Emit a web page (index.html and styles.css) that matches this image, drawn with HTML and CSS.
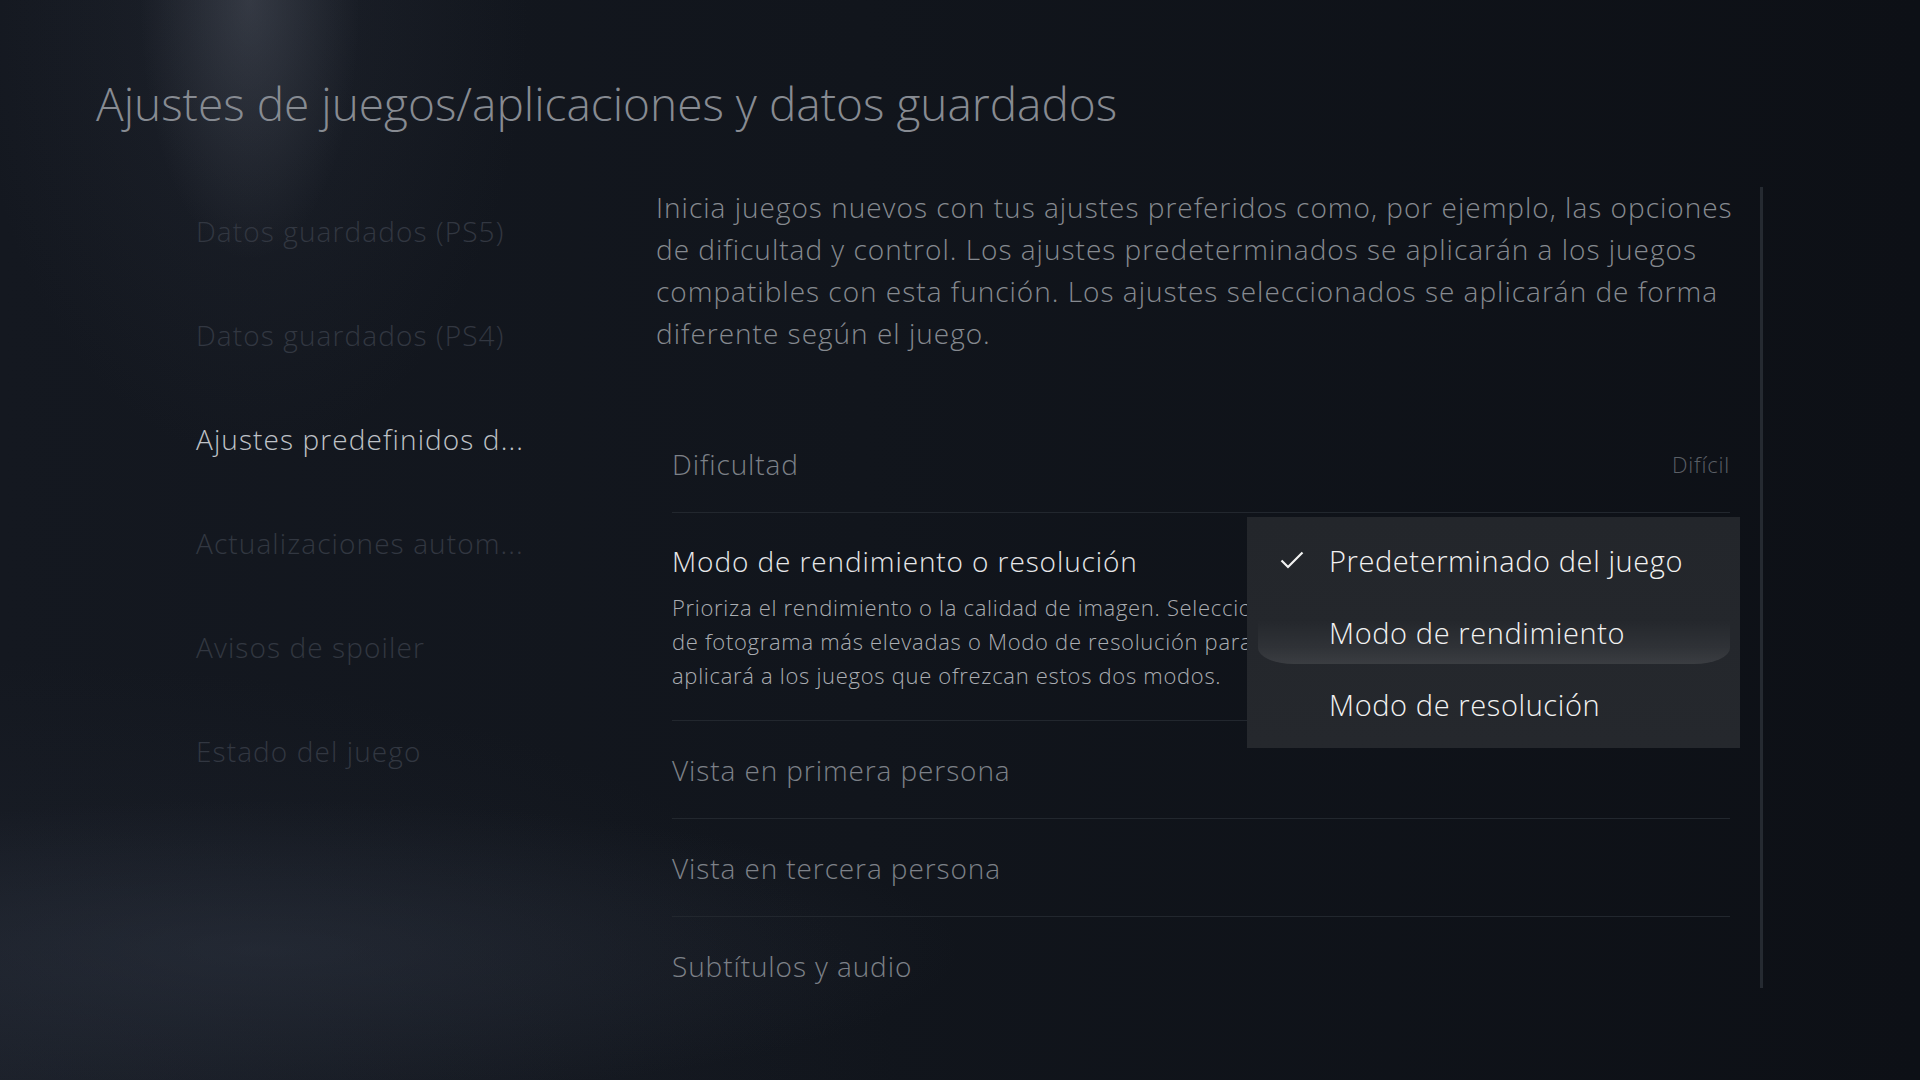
FILE: index.html
```html
<!DOCTYPE html>
<html lang="es">

<head>
  <meta charset="UTF-8">
  <meta name="viewport" content="width=device-width, initial-scale=1.0">
  <title>Ajustes de juegos/aplicaciones y datos guardados</title>
  <link rel="stylesheet" href="styles.css">
</head>

<body>
  <header class="top">
    <h1>Ajustes de juegos/aplicaciones y datos guardados</h1>
  </header>

  <div class="main">
    <!-- Left menu -->
    <nav class="side">
      <div class="side-item">Datos guardados (PS5)</div>
      <div class="side-item">Datos guardados (PS4)</div>
      <div class="side-item active">Ajustes predefinidos d...</div>
      <div class="side-item">Actualizaciones autom...</div>
      <div class="side-item">Avisos de spoiler</div>
      <div class="side-item">Estado del juego</div>
    </nav>

    <!-- Settings content -->
    <section class="content">
      <p class="intro">Inicia juegos nuevos con tus ajustes preferidos como, por ejemplo, las opciones<br>de dificultad y control. Los ajustes predeterminados se aplicarán a los juegos<br>compatibles con esta función. Los ajustes seleccionados se aplicarán de forma<br>diferente según el juego.</p>

      <ul class="options">
        <li class="option">
          <span>Dificultad</span>
          <span class="value">Difícil</span>
        </li>
        <li class="option option-open">
          <div class="option-title">Modo de rendimiento o resolución</div>
          <!-- the open dropdown hides the end of these lines -->
          <p class="option-desc">Prioriza el rendimiento o la calidad de imagen. Selecciona<br>de fotograma más elevadas o Modo de resolución para<br>aplicará a los juegos que ofrezcan estos dos modos.</p>

          <div class="dropdown">
            <div class="dropdown-item">
              <svg class="check" width="24" height="18" viewBox="0 0 24 18">
                <path d="M1.5 9.5 L8 16 L22.5 1.5" fill="none" stroke="#f2f2f2" stroke-width="2.2" />
              </svg>
              <span>Predeterminado del juego</span>
            </div>
            <div class="dropdown-item focused">
              <span class="check"></span>
              <span>Modo de rendimiento</span>
            </div>
            <div class="dropdown-item">
              <span class="check"></span>
              <span>Modo de resolución</span>
            </div>
          </div>
        </li>
        <li class="option"><span>Vista en primera persona</span></li>
        <li class="option"><span>Vista en tercera persona</span></li>
        <li class="option"><span>Subtítulos y audio</span></li>
      </ul>
    </section>

    <div class="scrollbar"></div>
  </div>
</body>

</html>
```

FILE: styles.css
```css
html,
body {
  margin: 0;
  padding: 0;
}

body {
  width: 1920px;
  height: 1080px;
  overflow: hidden;
  font-family: "Open Sans", "Noto Sans", sans-serif;
  font-weight: 300;
  color: #8a8e94;
  background:
    radial-gradient(ellipse 110px 260px at 250px 0px, rgba(130, 136, 150, 0.24), transparent 100%),
    radial-gradient(ellipse 280px 460px at 250px 0px, rgba(60, 66, 80, 0.22), transparent 100%),
    radial-gradient(ellipse 700px 150px at 260px 950px, rgba(60, 68, 84, 0.30), transparent 100%),
    radial-gradient(ellipse 900px 420px at 0px 1080px, rgba(40, 46, 58, 0.40), transparent 100%),
    linear-gradient(90deg, #141820 0%, #11151c 45%, #0d1016 100%);
}

/* Title */
.top {
  padding: 80px 0 0 96px;
}

.top h1 {
  margin: 0;
  font-size: 46px;
  font-weight: 300;
  line-height: 46px;
  color: #878b92;
  white-space: nowrap;
}

/* Columns */
.main {
  display: grid;
  grid-template-columns: 440px 1084px 3px;
  column-gap: 20px;
  margin-top: 53px;
  padding-left: 196px;
}

.side-item {
  font-size: 28px;
  letter-spacing: 1.1px;
  line-height: 104px;
  color: #323741;
  white-space: nowrap;
}

.side-item.active {
  color: #bfc2c7;
}

.intro {
  margin: 0;
  padding-top: 7px;
  font-size: 28px;
  letter-spacing: 1px;
  line-height: 42px;
  color: #868a90;
  white-space: nowrap;
}

/* Option rows */
.options {
  list-style: none;
  margin: 61px 10px 0 16px;
  padding: 0;
}

.option {
  display: flex;
  justify-content: space-between;
  align-items: center;
  height: 97px;
  border-bottom: 1px solid #22272e;
  font-size: 28px;
  letter-spacing: 0.9px;
  color: #7d8188;
}

.option:last-child {
  border-bottom: none;
}

.option .value {
  font-size: 22px;
  letter-spacing: 0.8px;
  color: #5b5f66;
}

.option-open {
  position: relative;
  display: block;
  height: auto;
  padding: 29px 0 28px;
}

.option-title {
  width: fit-content;
  font-size: 28px;
  line-height: 38px;
  color: #e6e7e9;
  white-space: nowrap;
}

.option-desc {
  width: 575px;
  overflow: hidden;
  margin: 10px 0 0;
  font-size: 22px;
  letter-spacing: 0.7px;
  line-height: 34px;
  color: #aaadb2;
  white-space: nowrap;
}

/* Dropdown */
.dropdown {
  position: absolute;
  top: 4px;
  left: 575px;
  right: -10px;
  height: 231px;
  box-sizing: border-box;
  padding: 7px 0 8px;
  background: linear-gradient(180deg, #23262b 0%, #25282d 100%);
}

.dropdown-item {
  position: relative;
  display: flex;
  align-items: center;
  gap: 25px;
  height: 72px;
  padding-left: 33px;
  font-size: 29px;
  letter-spacing: 0.6px;
  color: #f2f2f2;
  white-space: nowrap;
}

.dropdown-item .check {
  width: 24px;
  flex: none;
}

.dropdown-item span {
  position: relative;
}

.dropdown-item.focused::before {
  content: "";
  position: absolute;
  left: 11px;
  right: 10px;
  top: 0;
  bottom: 4px;
  background: linear-gradient(180deg, rgba(255, 255, 255, 0) 35%, rgba(255, 255, 255, 0.05) 75%, rgba(255, 255, 255, 0.10) 100%);
  border-radius: 0 0 36px 36px / 0 0 16px 16px;
}

.scrollbar {
  margin-top: 8px;
  height: 801px;
  background: #252a31;
}
```
